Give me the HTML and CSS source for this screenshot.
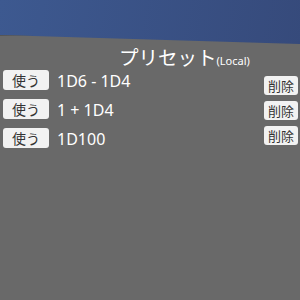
FILE: index.html
```html
<!DOCTYPE html>
<html lang="ja">
<head>
    <meta charset="UTF-8">
    <title>プリセット</title>
    <link rel="stylesheet" href="styles.css">
</head>
<body>
    <div class="panel">
        <h2 class="title">プリセット<small>(Local)</small></h2>
        <div class="lists">
            <div class="presets">
                <div class="row"><button class="btn">使う</button><span class="dice">1D6 - 1D4</span></div>
                <div class="row"><button class="btn">使う</button><span class="dice">1 + 1D4</span></div>
                <div class="row"><button class="btn">使う</button><span class="dice">1D100</span></div>
            </div>
            <div class="deletes">
                <button class="btn del">削除</button>
                <button class="btn del">削除</button>
                <button class="btn del">削除</button>
            </div>
        </div>
    </div>
</body>
</html>
```

FILE: styles.css
```css
body {
    margin: 0;
    height: 300px;
    overflow: hidden;
    background: linear-gradient(100deg, #3d5990, #354878);
    font-family: "Noto Sans", "Noto Sans CJK JP", sans-serif;
}

.panel {
    margin-top: 35px;
    height: 265px;
    background: #696969;
    clip-path: polygon(0 0, 100% 9px, 100% 100%, 0 100%);
    border-top: 1px solid #555;
}

.title {
    margin: 0;
    padding: 9px 0 0 119px;
    height: 25px;
    color: #fff;
    font-size: 19.5px;
    font-weight: normal;
    line-height: 25px;
}

.title small {
    font-size: 11px;
    line-height: 11px;
}

.lists {
    display: flex;
    justify-content: space-between;
}

.presets {
    padding-left: 3px;
    display: flex;
    flex-direction: column;
    gap: 9px;
}

.row {
    display: flex;
    align-items: center;
    gap: 8px;
    height: 20px;
}

.dice {
    color: #fff;
    font-size: 16px;
    margin-top: 2px;
}

.btn {
    font-family: "Noto Sans CJK JP", sans-serif;
    background: #f2f2f2;
    color: #333;
    border: none;
    border-radius: 3px;
    padding: 0;
    width: 46px;
    height: 20px;
    font-size: 14px;
    line-height: 20px;
}

.deletes {
    display: flex;
    flex-direction: column;
    gap: 6px;
    padding: 6px 2px 0 0;
}

.del {
    width: 34px;
    height: 19px;
    font-size: 13px;
    line-height: 19px;
}
```
